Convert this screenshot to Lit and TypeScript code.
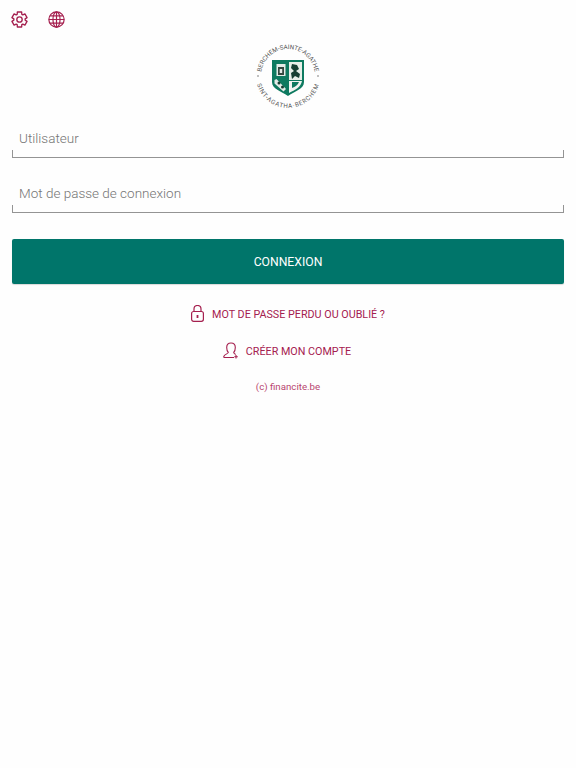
import { LitElement, html, css, unsafeCSS } from "lit";
import { customElement } from "lit/decorators.js";

const RED = "#a5204f";

function gearPath(): string {
  const pts: string[] = [];
  const n = 6;
  for (let i = 0; i < n; i++) {
    const a = (i * 360) / n - 90;
    const at = (deg: number, r: number) => {
      const t = (deg * Math.PI) / 180;
      return `${(12 + r * Math.cos(t)).toFixed(2)} ${(12 + r * Math.sin(t)).toFixed(2)}`;
    };
    pts.push(at(a - 16, 11), at(a + 16, 11), at(a + 24, 8), at(a + 36, 8));
  }
  return "M" + pts.join("L") + "Z";
}

@customElement("app-root")
export class AppRoot extends LitElement {
  static styles = css`
    :host { display: block; height: 768px; background: #fefefe; font-family: Roboto, sans-serif; overflow: hidden; }
    .top { display: flex; gap: 20px; padding: 11px 0 0 11px; height: 43px; box-sizing: border-box; }
    .top svg { width: 17px; height: 17px; display: block; }
    .logo { display: flex; justify-content: center; height: 66px; }
    .logo svg { width: 66px; height: 66px; display: block; }
    form { display: flex; flex-direction: column; padding: 0 12px; margin-top: 16px; }
    .field { position: relative; height: 33px; padding: 0 7px; font-size: 13.5px; font-weight: 300; color: #757575; line-height: 26px; margin-bottom: 22px; box-sizing: border-box; border-bottom: 1.5px solid #949494; }
    .field::before, .field::after { content: ""; position: absolute; bottom: 0; width: 1px; height: 7px; background: #949494; }
    .field::before { left: 0; }
    .field::after { right: 0; }
    .btn { height: 45px; margin-top: 4px; background: #00756a; color: #fff; font-size: 12.200px; border-radius: 2px; display: flex; align-items: center; justify-content: center; box-shadow: 0 1px 1px rgba(0,0,0,.15); }
    .link { display: flex; align-items: center; justify-content: center; gap: 8px; color: ${unsafeCSS(RED)}; font-size: 10.750px; height: 20px; }
    .link svg { display: block; }
    .link span { padding-top: 2px; }
    .l1 { margin-top: 19px; }
    .l2 { margin-top: 17px; gap: 7px; padding-right: 2px; }
    .copy { text-align: center; color: #b8456f; font-size: 9.700px; margin-top: 20px; line-height: 14px; }
  `;

  private gear() {
    return html`<svg viewBox="0 0 24 24" fill="none" stroke=${RED} stroke-width="1.900" stroke-linejoin="round"><circle cx="12" cy="12" r="3.800"></circle><path d=${gearPath()}></path></svg>`;
  }
  private globe() {
    return html`<svg viewBox="0 0 24 24" fill="none" stroke=${RED} stroke-width="1.700"><circle cx="12" cy="12" r="10.800"></circle><ellipse cx="12" cy="12" rx="5" ry="10.800"></ellipse><path d="M12 1.200v21.600M1.200 12h21.600M3 6.800h18M3 17.200h18"></path></svg>`;
  }
  private emblem() {
    return html`<svg viewBox="0 0 66 66">
      <defs>
        <path id="t" d="M6.300 37 A27 27 0 1 1 59.700 37"></path>
        <path id="b" d="M1.500 38.600 A32 32 0 0 0 64.500 38.600"></path>
      </defs>
      <text font-family="Roboto, sans-serif" font-size="6.200" fill="#555" letter-spacing="0"><textPath href="#t" startOffset="50%" text-anchor="middle">BERCHEM-SAINTE-AGATHE</textPath></text>
      <text font-family="Roboto, sans-serif" font-size="6.200" fill="#555" letter-spacing=".75"><textPath href="#b" startOffset="50%" text-anchor="middle">SINT-AGATHA-BERCHEM</textPath></text>
      <circle cx="3" cy="33" r=".7" fill="#555"></circle>
      <circle cx="63" cy="33" r=".7" fill="#555"></circle>
      <path d="M17 17H49V39C49 46 40 48 33 53C26 48 17 46 17 39Z" fill="#0e7a60"></path>
      <path d="M21.500 21h9v12h-9z" fill="#e4ece8"></path>
      <path d="M23 24h6v8h-6z" fill="#33483f"></path>
      <path d="M24.700 26h2.500v4h-2.500z" fill="#e4ece8"></path>
      <path d="M34 19H47V37H34Z" fill="#e8efe9"></path>
      <path d="M37 21l5 1 2 4-3 2 4 3 -1 4 -4-2-3 3-1-6 3-2-3-3z" fill="#173f33"></path>
      <path d="M19.500 37l2-1 9.500 10-2.500 2.500-9-8z" fill="#e4ece8"></path>
      <circle cx="24" cy="40" r="1.500" fill="#173f33"></circle>
      <circle cx="27.500" cy="44" r="1.500" fill="#173f33"></circle>
      <path d="M34 38H47C46 44 40 47 34 50Z" fill="#f1f4f1"></path>
      <path d="M37 39h7c-1 3-4 5-7 6z" fill="#0e7a60"></path>
    </svg>`;
  }

  render() {
    return html`
      <div class="top">${this.gear()}${this.globe()}</div>
      <div class="logo">${this.emblem()}</div>
      <form>
        <div class="field">Utilisateur</div>
        <div class="field">Mot de passe de connexion</div>
        <div class="btn">CONNEXION</div>
      </form>
      <div class="link l1">
        <svg width="13" height="17" viewBox="0 0 13 17" fill="none" stroke=${RED} stroke-width="1.200"><rect x=".6" y="6.500" width="11.800" height="9.800" rx="2"></rect><path d="M3 6.500V4a3.500 3.500 0 0 1 7 0v2.500"></path><path d="M6.500 10v3" stroke-width="1.800"></path></svg>
        <span>MOT DE PASSE PERDU OU OUBLIÉ ?</span>
      </div>
      <div class="link l2">
        <svg width="16" height="17" viewBox="0 0 16 17" fill="none" stroke=${RED} stroke-width="1.100"><path d="M11 15.500H1.500c-.5 0-1-.5-.6-1.300C2 12 5 11.800 5.300 10.500 3.800 9 3.700 7 3.700 5.500 3.700 2.800 5.500 1 8 1s4.300 1.800 4.300 4.500c0 1.500-.2 3.500-1.600 5 .1 .8 1 1.500 2 2"></path><path d="M13 13v3.500M11.300 14.800h3.500"></path></svg>
        <span>CRÉER MON COMPTE</span>
      </div>
      <div class="copy">(c) financite.be</div>
    `;
  }
}
